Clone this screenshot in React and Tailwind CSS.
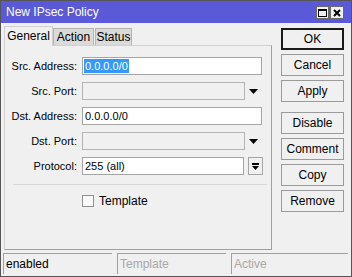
import React from 'react';

const font = "font-['Liberation_Sans',Arial,sans-serif]";

function Arrow() {
  return (
    <svg width="9" height="5" viewBox="0 0 9 5" className="shrink-0">
      <path d="M0 0h9L4.5 5z" fill="#000" />
    </svg>
  );
}

function Field({ label, value, kind = 'text', selected }) {
  return (
    <div className="flex items-center h-[18px]">
      <div className="w-[77px] text-right pr-[5px] leading-none">{label}:</div>
      {kind === 'text' && (
        <div className="w-[180px] h-[18px] border border-[#a5a5a5] bg-white flex items-center px-[1px]">
          {value && (
            <span className={selected ? 'bg-[#3399ff] text-white px-[1px] leading-[14px]' : 'px-[1px]'}>{value}</span>
          )}
        </div>
      )}
      {kind === 'select' && (
        <>
          <div className="w-[163px] h-[18px] border border-[#b4b4b4] bg-[#f0f0f0]" />
          <div className="w-[17px] flex justify-center">
            <Arrow />
          </div>
        </>
      )}
      {kind === 'combo' && (
        <>
          <div className="w-[162px] h-[18px] border border-[#a5a5a5] bg-white flex items-center px-[2px]">{value}</div>
          <div className="ml-[4px] w-[15px] h-[18px] border border-[#a5a5a5] bg-[#f0f0f0] flex flex-col items-center justify-center gap-[1px]">
            <div className="w-[7px] h-[2px] bg-black" />
            <svg width="7" height="4" viewBox="0 0 7 4">
              <path d="M0 0h7L3.5 4z" fill="#000" />
            </svg>
          </div>
        </>
      )}
    </div>
  );
}

function Btn({ children, primary }) {
  return (
    <div
      className={
        'w-[63px] h-[22px] flex items-center justify-center text-[12px] bg-[#f0f0f0] ' +
        (primary ? 'border-2 border-[#1a1a1a]' : 'border border-[#9a9a9a]')
      }
    >
      {children}
    </div>
  );
}

export default function App() {
  return (
    <div className={`w-[352px] h-[277px] border border-[#555] bg-[#f0f0f0] flex flex-col text-[11px] text-black ${font}`}>
      {/* Title bar */}
      <div className="h-[22px] bg-[#5a5ad8] flex items-center justify-between pl-[5px] pr-[7px] shrink-0">
        <span className="text-white text-[12px]">New IPsec Policy</span>
        <div className="flex gap-[1px] mt-[1px]">
          <div className="w-[13px] h-[13px] bg-[#f0f0f0] border border-[#6a6a6a] flex items-center justify-center">
            <div className="w-[9px] h-[8px] border border-black border-t-2" />
          </div>
          <div className="w-[14px] h-[13px] bg-[#f0f0f0] border border-[#6a6a6a] flex items-center justify-center">
            <svg width="8" height="8" viewBox="0 0 8 8">
              <path d="M1 1l6 6M7 1L1 7" stroke="#000" strokeWidth="2" />
            </svg>
          </div>
        </div>
      </div>

      {/* Body */}
      <div className="flex flex-1">
        <div className="ml-[3px] mt-[2px] w-[268px] flex flex-col">
          <div className="flex items-end h-[20px]">
            <div className="h-[20px] w-[49px] bg-[#f0f0f0] border border-b-0 border-[#d0d0d0] flex items-center justify-center text-[12px] relative z-10 -mb-px pb-[2px]">
              General
            </div>
            <div className="h-[17px] w-[41px] bg-[#dadada] border border-[#b4b4b4] border-b-0 flex items-center justify-center text-[12px]">
              Action
            </div>
            <div className="h-[17px] w-[37px] ml-[1px] bg-[#dadada] border border-[#b4b4b4] border-b-0 flex items-center justify-center text-[12px]">
              Status
            </div>
          </div>
          <div className="h-[205px] border border-[#d0d0d0] border-r-[#a0a0a0] border-b-[#a0a0a0] flex flex-col pt-[11px]">
            <div className="flex flex-col gap-[7px]">
              <Field label="Src. Address" value="0.0.0.0/0" selected />
              <Field label="Src. Port" kind="select" />
              <Field label="Dst. Address" value="0.0.0.0/0" />
              <Field label="Dst. Port" kind="select" />
              <Field label="Protocol" value="255 (all)" kind="combo" />
            </div>
            <div className="ml-[8px] w-[254px] h-px bg-[#d8d8d8] mt-[9px]" />
            <div className="flex items-center ml-[77px] mt-[7px] gap-[5px]">
              <div className="w-[12px] h-[12px] border border-[#8f8f8f] bg-[#f8f8f8]" />
              <span className="text-[12px]">Template</span>
            </div>
          </div>
        </div>

        <div className="ml-[9px] mt-[5px] flex flex-col">
          <Btn primary>OK</Btn>
          <div className="mt-[4px] flex flex-col gap-[4px]">
            <Btn>Cancel</Btn>
            <Btn>Apply</Btn>
          </div>
          <div className="mt-[10px] flex flex-col gap-[4px]">
            <Btn>Disable</Btn>
            <Btn>Comment</Btn>
            <Btn>Copy</Btn>
            <Btn>Remove</Btn>
          </div>
        </div>
      </div>

      {/* Status bar */}
      <div className="h-[23px] flex gap-[5px] pl-[2px] pr-[3px] pb-[2px] shrink-0">
        <div className="w-[109px] border-t border-l border-[#a0a0a0] flex items-center pl-[2px] text-[12px]">enabled</div>
        <div className="w-[109px] border-t border-l border-[#a0a0a0] flex items-center pl-[2px] text-[12px] text-[#a8a8a8]">Template</div>
        <div className="flex-1 border-t border-l border-[#a0a0a0] flex items-center pl-[2px] text-[12px] text-[#a8a8a8]">Active</div>
      </div>
    </div>
  );
}
